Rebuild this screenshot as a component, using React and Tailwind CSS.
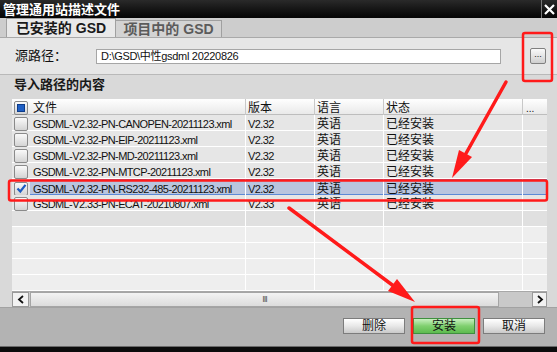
import React from "react";

const rows = [
  { file: "GSDML-V2.32-PN-CANOPEN-20211123.xml", ver: "V2.32" },
  { file: "GSDML-V2.32-PN-EIP-20211123.xml", ver: "V2.32" },
  { file: "GSDML-V2.32-PN-MD-20211123.xml", ver: "V2.32" },
  { file: "GSDML-V2.32-PN-MTCP-20211123.xml", ver: "V2.32" },
  { file: "GSDML-V2.32-PN-RS232-485-20211123.xml", ver: "V2.32", selected: true },
  { file: "GSDML-V2.33-PN-ECAT-20210807.xml", ver: "V2.33" },
];

const cols = "grid grid-cols-[18px_215px_69px_69px_139px_25px]";

const CheckBox = ({ checked, partial }) => (
  <div className="w-[14px] h-[14px] border border-[#8a8a8a] rounded-[2px] bg-gradient-to-b from-[#fafafa] to-[#d4d4d4] flex items-center justify-center">
    {partial && <div className="w-[8px] h-[8px] bg-[#1f5fc4] border border-[#0d3c8a]" />}
    {checked && (
      <svg width="11" height="11" viewBox="0 0 11 11">
        <path d="M1.5 5.5 L4.3 8.5 L9.5 1.8" fill="none" stroke="#1e5cc2" strokeWidth="2.2" />
      </svg>
    )}
  </div>
);

const Button = ({ children, green }) => (
  <button
    className={`w-[62px] h-[16px] border text-[12px] leading-none flex items-center justify-center ${
      green
        ? "border-[#3f8f3f] bg-gradient-to-b from-[#c8f0c0] via-[#7fd06f] to-[#5dbb4f] text-[#111]"
        : "border-[#7c7c7c] bg-gradient-to-b from-[#ffffff] via-[#e8e8e8] to-[#c9c9c9] text-[#111]"
    }`}
  >
    {children}
  </button>
);

export default function App() {
  return (
    <div
      className="relative w-[557px] h-[352px] bg-[#d6d6d6] flex flex-col overflow-hidden text-[#111]"
      style={{ fontFamily: '"Liberation Sans", "Noto Sans CJK SC", sans-serif' }}
    >
      {/* title bar */}
      <div className="h-[18px] bg-gradient-to-b from-[#2a2a2a] to-[#050505] flex items-center justify-between">
        <span className="pl-[3px] text-white font-bold text-[13px] leading-none">管理通用站描述文件</span>
        <div className="h-full w-[16px] border-l border-[#777] flex items-center justify-center">
          <svg width="11" height="11" viewBox="0 0 11 11">
            <path d="M1 1 L10 10 M10 1 L1 10" stroke="#fff" strokeWidth="2.2" />
          </svg>
        </div>
      </div>

      {/* tabs */}
      <div className="h-[20px] bg-[#cdcdcd] flex items-end pl-[6px] border-b border-[#a9a9a9]">
        <div className="w-[110px] h-[19px] bg-[#e9e9e9] border-t border-l border-r border-[#a0a0a0] flex items-center justify-center font-bold text-[14px] text-[#1a1a1a]">
          已安装的 GSD
        </div>
        <div className="w-[106px] h-[17px] bg-[#d3d3d3] border-t border-r border-[#a0a0a0] flex items-center justify-center font-bold text-[14px] text-[#5b5b5b]">
          项目中的 GSD
        </div>
      </div>

      {/* source path */}
      <div className="h-[37px] bg-[#e6e6e6] border-b border-[#b9b9b9] flex items-center pl-[15px] pr-[11px]">
        <span className="w-[81px] text-[13px]">源路径：</span>
        <div className="w-[405px] h-[15px] bg-white border border-[#a6a6a6] flex items-center pl-[4px] text-[11px] tracking-[-0.3px]">
          D:\GSD\中性gsdml 20220826
        </div>
        <div className="ml-auto w-[16px] h-[16px] border border-[#808080] rounded-[2px] bg-gradient-to-b from-[#fafafa] to-[#cfcfcf] flex items-center justify-center text-[9px] leading-none pb-[3px]">
          ...
        </div>
      </div>

      {/* section */}
      <div className="flex-1 bg-[#d9d9d9] flex flex-col px-[12px] pr-[10px]">
        <div className="h-[24px] flex items-center pl-[2px] font-bold text-[13px] text-[#1a1a1a] pb-[4px]">导入路径的内容</div>

        <div className="w-[535px] flex flex-col text-[11px] tracking-[-0.6px]">
          {/* header */}
          <div className={`${cols} h-[16px] bg-gradient-to-b from-[#ffffff] to-[#e9e9e9] border-b border-[#bdbdbd] tracking-normal`}>
            <div className="flex items-center justify-center"><CheckBox partial /></div>
            <div className="flex items-center pl-[3px] text-[12px]">文件</div>
            <div className="flex items-center pl-[2px] border-l border-[#c8c8c8] text-[12px]">版本</div>
            <div className="flex items-center pl-[2px] border-l border-[#c8c8c8] text-[12px]">语言</div>
            <div className="flex items-center pl-[2px] border-l border-[#c8c8c8] text-[12px]">状态</div>
            <div className="flex items-center pl-[3px] border-l border-[#c8c8c8] text-[10px]">...</div>
          </div>

          {rows.map((r) => (
            <div
              key={r.file}
              className={`${cols} h-[16px] border-b ${
                r.selected ? "bg-[#b9c5de] border-[#5c8ad6]" : "bg-[#e6e6e6] border-white"
              }`}
            >
              <div className={`flex items-center justify-center ${r.selected ? "bg-[#e6e6e6]" : ""}`}>
                <CheckBox checked={r.selected} />
              </div>
              <div className={`flex items-center pl-[3px] whitespace-nowrap overflow-hidden ${r.selected ? "border-t border-[#5c8ad6]" : ""}`}>{r.file}</div>
              <div className={`flex items-center pl-[2px] border-l border-white ${r.selected ? "border-t border-t-[#5c8ad6]" : ""}`}>{r.ver}</div>
              <div className={`flex items-center pl-[2px] border-l border-white text-[12px] tracking-normal ${r.selected ? "border-t border-t-[#5c8ad6]" : ""}`}>英语</div>
              <div className={`flex items-center pl-[2px] border-l border-white text-[12px] tracking-normal ${r.selected ? "border-t border-t-[#5c8ad6]" : ""}`}>已经安装</div>
              <div className={`border-l border-white ${r.selected ? "border-t border-t-[#5c8ad6] border-r border-r-[#5c8ad6]" : ""}`} />
            </div>
          ))}

          {[0, 1, 2, 3, 4].map((i) => (
            <div
              key={i}
              className={`${cols} h-[16px] border-b border-white ${i === 0 ? "bg-[#e0e0e0]" : "bg-[#eeeeee]"}`}
            >
              <div />
              <div />
              <div className="border-l border-white" />
              <div className="border-l border-white" />
              <div className="border-l border-white" />
              <div className="border-l border-white" />
            </div>
          ))}

          {/* scrollbar */}
          <div className="h-[16px] bg-[#c9c9c9] border-t border-[#a8a8a8] flex items-center">
            <div className="w-[17px] h-[15px] bg-[#f2f2f2] border border-[#9a9a9a] flex items-center justify-center">
              <svg width="8" height="9" viewBox="0 0 8 9"><path d="M6 1 L2 4.5 L6 8" fill="none" stroke="#111" strokeWidth="1.8" /></svg>
            </div>
            <div className="ml-[1px] w-[469px] h-[15px] bg-gradient-to-b from-[#f3f3f3] to-[#dcdcdc] border border-[#a5a5a5] flex items-center justify-center">
              <span className="text-[9px] leading-none text-[#555] tracking-[-1px]">III</span>
            </div>
            <div className="ml-auto w-[15px] h-[15px] bg-[#f2f2f2] border border-[#9a9a9a] flex items-center justify-center">
              <svg width="8" height="9" viewBox="0 0 8 9"><path d="M2 1 L6 4.5 L2 8" fill="none" stroke="#111" strokeWidth="1.8" /></svg>
            </div>
          </div>
        </div>
        <div className="flex-1" />
      </div>

      {/* bottom buttons */}
      <div className="h-[39px] bg-[#b3b3b3] border-t border-[#a2a2a2] flex items-center justify-end gap-[8px] pr-[12px] pb-[2px]">
        <Button>删除</Button>
        <Button green>安装</Button>
        <Button>取消</Button>
      </div>
      <div className="h-[6px] bg-[#0c0c0c] border-t border-[#6a6a6a]" />

      {/* annotations */}
      <svg className="absolute inset-0 pointer-events-none" width="557" height="352">
        <rect x="523" y="33" width="29" height="48" rx="2" fill="none" stroke="#ff1a1a" strokeWidth="2.5" />
        <rect x="9" y="180.5" width="538" height="20" rx="2" fill="none" stroke="#ff1a1a" strokeWidth="2.5" />
        <rect x="412" y="307" width="67" height="36" rx="2" fill="none" stroke="#ff1a1a" strokeWidth="2.5" />
        <line x1="506" y1="82" x2="464" y2="157" stroke="#ff1a1a" strokeWidth="3.5" strokeLinecap="round" />
        <polygon points="452,178 472,157 459,150" fill="#ff1a1a" />
        <line x1="289" y1="208" x2="395" y2="287" stroke="#ff1a1a" strokeWidth="3.5" strokeLinecap="round" />
        <polygon points="415,302 388,291 397,279" fill="#ff1a1a" />
      </svg>
    </div>
  );
}
